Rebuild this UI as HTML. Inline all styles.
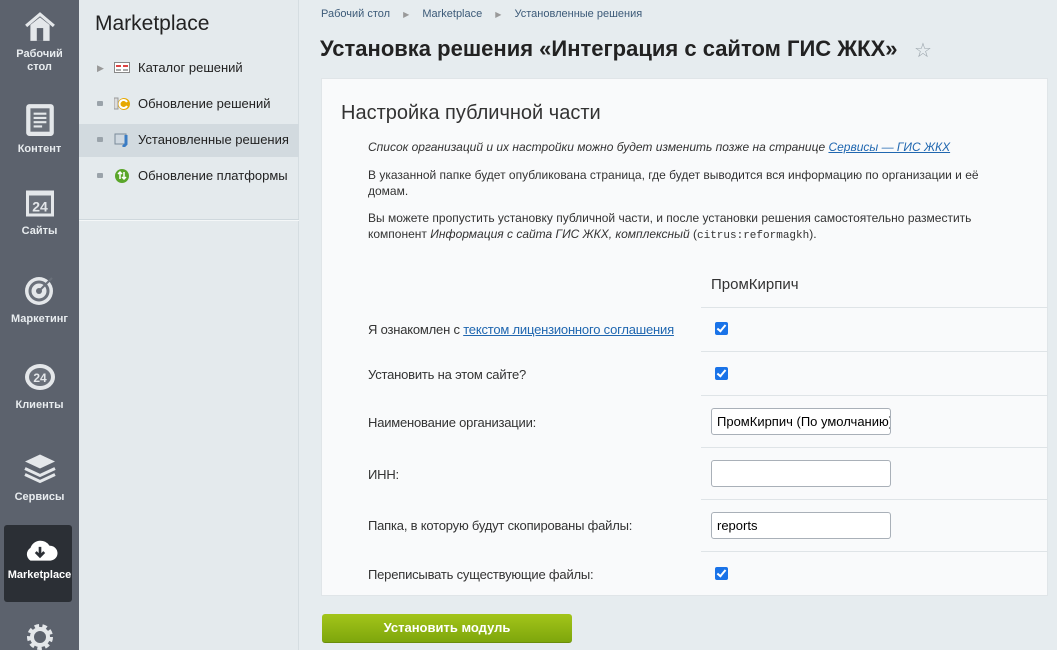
<!DOCTYPE html>
<html><head><meta charset="utf-8"><style>
*{margin:0;padding:0;box-sizing:border-box}
html,body{width:1057px;height:650px;overflow:hidden}
body{position:relative;background:#e6ecef;font-family:"Liberation Sans",sans-serif;color:#333}
.a{position:absolute}
#sb{left:0;top:0;width:79px;height:650px;background:#5c626d}
.ni{position:absolute;left:0;width:79px;text-align:center;color:#e8ecef;font-size:11px;font-weight:bold;line-height:13px}
.ni svg{display:block;margin:0 auto 6px}
#mp{left:79px;top:0;width:220px;height:650px;background:#e4eaed;border-right:1px solid #d5dde1}
.mi{position:absolute;left:0;width:220px;height:32px;line-height:32px;font-size:13px;color:#222}
.mi .b{position:absolute;left:18px;top:13px;width:6px;height:5px;background:#9aa3aa;border-radius:1px}
.mi .t{position:absolute;left:59px}
.mi .ic{position:absolute;left:35px;top:8px;width:16px;height:15px}
#panel{left:321px;top:78px;width:727px;height:518px;background:#f9fafb;border:1px solid #e0e5e8}
.lbl{position:absolute;left:368px;font-size:13px;color:#333;letter-spacing:-0.2px}
.ln{position:absolute;left:701px;width:347px;height:1px;background:#dfe4e7}
.cb{position:absolute;left:715px;width:13px;height:13px;background:#1a73e8;border-radius:2px}
.cb:after{content:"";position:absolute;left:4px;top:1px;width:3px;height:7px;border:solid #fff;border-width:0 2px 2px 0;transform:rotate(40deg)}
.inp{position:absolute;left:711px;width:180px;height:27px;border:1px solid #a9b0b8;border-radius:3px;background:#fff;font-size:13px;line-height:25px;padding-left:5px;color:#000;overflow:hidden;white-space:nowrap}
.p{position:absolute;left:368px;font-size:12px;color:#333;line-height:16px;width:650px}
a{color:#2067b0}
</style></head><body>
<div id="sb" class="a">
 <div class="ni" style="top:12px"><svg width="32" height="30" viewBox="0 0 30 28"><path d="M2 13 L15 2 L28 13" fill="none" stroke="#e4e7ea" stroke-width="3"/><path d="M6 12 V27 H24 V12 L15 5Z" fill="#e4e7ea"/><rect x="12" y="15" width="6" height="12" fill="#5c626d"/></svg>Рабочий<br>стол</div>
 <div class="ni" style="top:103px"><svg width="30" height="34" viewBox="0 0 28 32"><rect x="1" y="1" width="26" height="30" rx="3" fill="#e4e7ea"/><rect x="5" y="5" width="18" height="22" fill="#6a707a"/><path d="M8 10h12M8 14h12M8 18h12M8 22h8" stroke="#e4e7ea" stroke-width="2"/></svg>Контент</div>
 <div class="ni" style="top:188px"><svg width="30" height="31" viewBox="0 0 30 28"><rect x="1" y="1" width="28" height="26" fill="#e4e7ea"/><rect x="4" y="6" width="22" height="18" fill="#6a707a"/><text x="15" y="22" font-size="14" font-weight="bold" fill="#e4e7ea" text-anchor="middle" font-family="Liberation Sans">24</text></svg>Сайты</div>
 <div class="ni" style="top:273px"><svg width="32" height="34" viewBox="0 0 32 32"><circle cx="15" cy="17" r="14" fill="#e4e7ea"/><circle cx="15" cy="17" r="9" fill="none" stroke="#6a707a" stroke-width="3"/><circle cx="15" cy="17" r="3" fill="#6a707a"/><path d="M15 17 L28 4" stroke="#6a707a" stroke-width="2"/></svg>Маркетинг</div>
 <div class="ni" style="top:361px"><svg width="32" height="32" viewBox="0 0 32 30"><ellipse cx="16" cy="15" rx="15" ry="13" fill="#e4e7ea"/><ellipse cx="16" cy="15" rx="11" ry="9" fill="#6a707a"/><text x="16" y="20" font-size="12" font-weight="bold" fill="#e4e7ea" text-anchor="middle" font-family="Liberation Sans">24</text></svg>Клиенты</div>
 <div class="ni" style="top:452px"><svg width="34" height="33" viewBox="0 0 34 30"><path d="M2 8 L17 1 L32 8 L17 15Z" fill="#e4e7ea"/><path d="M2 15 L17 22 L32 15" fill="none" stroke="#e4e7ea" stroke-width="3"/><path d="M2 21 L17 28 L32 21" fill="none" stroke="#e4e7ea" stroke-width="3"/></svg>Сервисы</div>
 <div class="a" style="left:4px;top:525px;width:68px;height:77px;background:#2b2f35;border-radius:3px"></div>
 <div class="ni" style="top:537px;color:#fff"><svg width="36" height="26" viewBox="0 0 34 24"><path d="M8 22 A7 7 0 0 1 8 10 A10 10 0 0 1 26 8 A7 7 0 0 1 27 22Z" fill="#fff"/><path d="M17 9v8M13 14l4 4 4-4" stroke="#2b2f35" stroke-width="2.5" fill="none"/></svg>Marketplace</div>
 <div class="ni" style="top:622px"><svg width="30" height="30" viewBox="0 0 30 30"><circle cx="15" cy="15" r="10" fill="none" stroke="#e4e7ea" stroke-width="6" stroke-dasharray="4 3"/><circle cx="15" cy="15" r="8" fill="none" stroke="#e4e7ea" stroke-width="4"/></svg></div>
</div>
<div id="mp" class="a">
 <div class="a" style="left:16px;top:12px;font-size:21px;color:#222">Marketplace</div>
 <div class="mi" style="top:52px"><span style="position:absolute;left:18px;top:0;font-size:9px;color:#999">▶</span><svg class="ic" viewBox="0 0 16 15"><rect x="0.5" y="2.5" width="15" height="10" fill="#fff" stroke="#888"/><rect x="2" y="5" width="5" height="2" fill="#d44"/><rect x="9" y="5" width="5" height="2" fill="#d44"/><rect x="2" y="9" width="5" height="2" fill="#aaa"/><rect x="9" y="9" width="5" height="2" fill="#aaa"/></svg><span class="t">Каталог решений</span></div>
 <div class="mi" style="top:88px"><span class="b"></span><svg class="ic" viewBox="0 0 16 15"><rect x="0" y="2" width="4" height="11" fill="#ddd" stroke="#999"/><circle cx="10" cy="8" r="6" fill="#e6a800"/><path d="M13 6 A4 4 0 1 0 13 10" stroke="#fff" stroke-width="2" fill="none"/></svg><span class="t">Обновление решений</span></div>
 <div class="a" style="left:0;top:124px;width:220px;height:33px;background:#d2dadf"></div>
 <div class="mi" style="top:124px"><span class="b"></span><svg class="ic" viewBox="0 0 16 15"><rect x="1" y="2" width="11" height="10" fill="#cfd8e0" stroke="#7a8a99"/><path d="M12 3v9l-3 3" stroke="#3a7cc4" stroke-width="3" fill="none"/></svg><span class="t">Установленные решения</span></div>
 <div class="mi" style="top:160px"><span class="b"></span><svg class="ic" viewBox="0 0 16 15"><circle cx="8" cy="8" r="7" fill="#5aa62a"/><path d="M6 4v7M4 6l2-2 2 2M10 11V4M8 9l2 2 2-2" stroke="#fff" stroke-width="1.5" fill="none"/></svg><span class="t">Обновление платформы</span></div>
 <div class="a" style="left:0;top:219px;width:220px;height:2px;background:#f4f7f8;border-top:1px solid #cfd8dd"></div>
</div>
<div class="a" style="left:321px;top:8px;font-size:11px;color:#3c5a78;white-space:nowrap">Рабочий стол <span style="color:#999;font-size:8px;margin:0 10px">▶</span> Marketplace <span style="color:#999;font-size:8px;margin:0 10px">▶</span> Установленные решения</div>
<div class="a" style="left:320px;top:36px;font-size:22px;font-weight:bold;color:#222;white-space:nowrap">Установка решения «Интеграция с сайтом ГИС ЖКХ»</div>
<div class="a" style="left:914px;top:38px;font-size:20px;color:#9aa4ab">☆</div>
<div id="panel" class="a"></div>
<div class="a" style="left:341px;top:102px;font-size:20px;color:#333">Настройка публичной части</div>
<div class="p" style="top:139px;font-style:italic;width:690px">Список организаций и их настройки можно будет изменить позже на странице <a href="#">Сервисы — ГИС ЖКХ</a></div>
<div class="p" style="top:167px">В указанной папке будет опубликована страница, где будет выводится вся информацию по организации и её домам.</div>
<div class="p" style="top:210px">Вы можете пропустить установку публичной части, и после установки решения самостоятельно разместить компонент <i>Информация с сайта ГИС ЖКХ, комплексный</i> (<span style="font-family:'Liberation Mono',monospace;font-size:11px">citrus:reformagkh</span>).</div>
<div class="a" style="left:711px;top:276px;font-size:15px;color:#333">ПромКирпич</div>
<div class="ln" style="top:307px"></div><div class="ln" style="top:351px"></div><div class="ln" style="top:395px"></div><div class="ln" style="top:447px"></div><div class="ln" style="top:499px"></div><div class="ln" style="top:551px"></div>
<div class="lbl" style="top:322px">Я ознакомлен с <a href="#">текстом лицензионного соглашения</a></div><div class="cb" style="top:322px"></div>
<div class="lbl" style="top:367px">Установить на этом сайте?</div><div class="cb" style="top:367px"></div>
<div class="lbl" style="top:415px">Наименование организации:</div><div class="inp" style="top:408px">ПромКирпич (По умолчанию)</div>
<div class="lbl" style="top:467px">ИНН:</div><div class="inp" style="top:460px"></div>
<div class="lbl" style="top:518px">Папка, в которую будут скопированы файлы:</div><div class="inp" style="top:512px">reports</div>
<div class="lbl" style="top:567px">Переписывать существующие файлы:</div><div class="cb" style="top:567px"></div>
<div class="a" style="left:322px;top:614px;width:250px;height:29px;border-radius:3px;background:linear-gradient(#a3c51a,#7ea60c);border-bottom:1px solid #6a8d0a;color:#fff;font-size:13px;font-weight:bold;text-align:center;line-height:28px">Установить модуль</div>
</body></html>
